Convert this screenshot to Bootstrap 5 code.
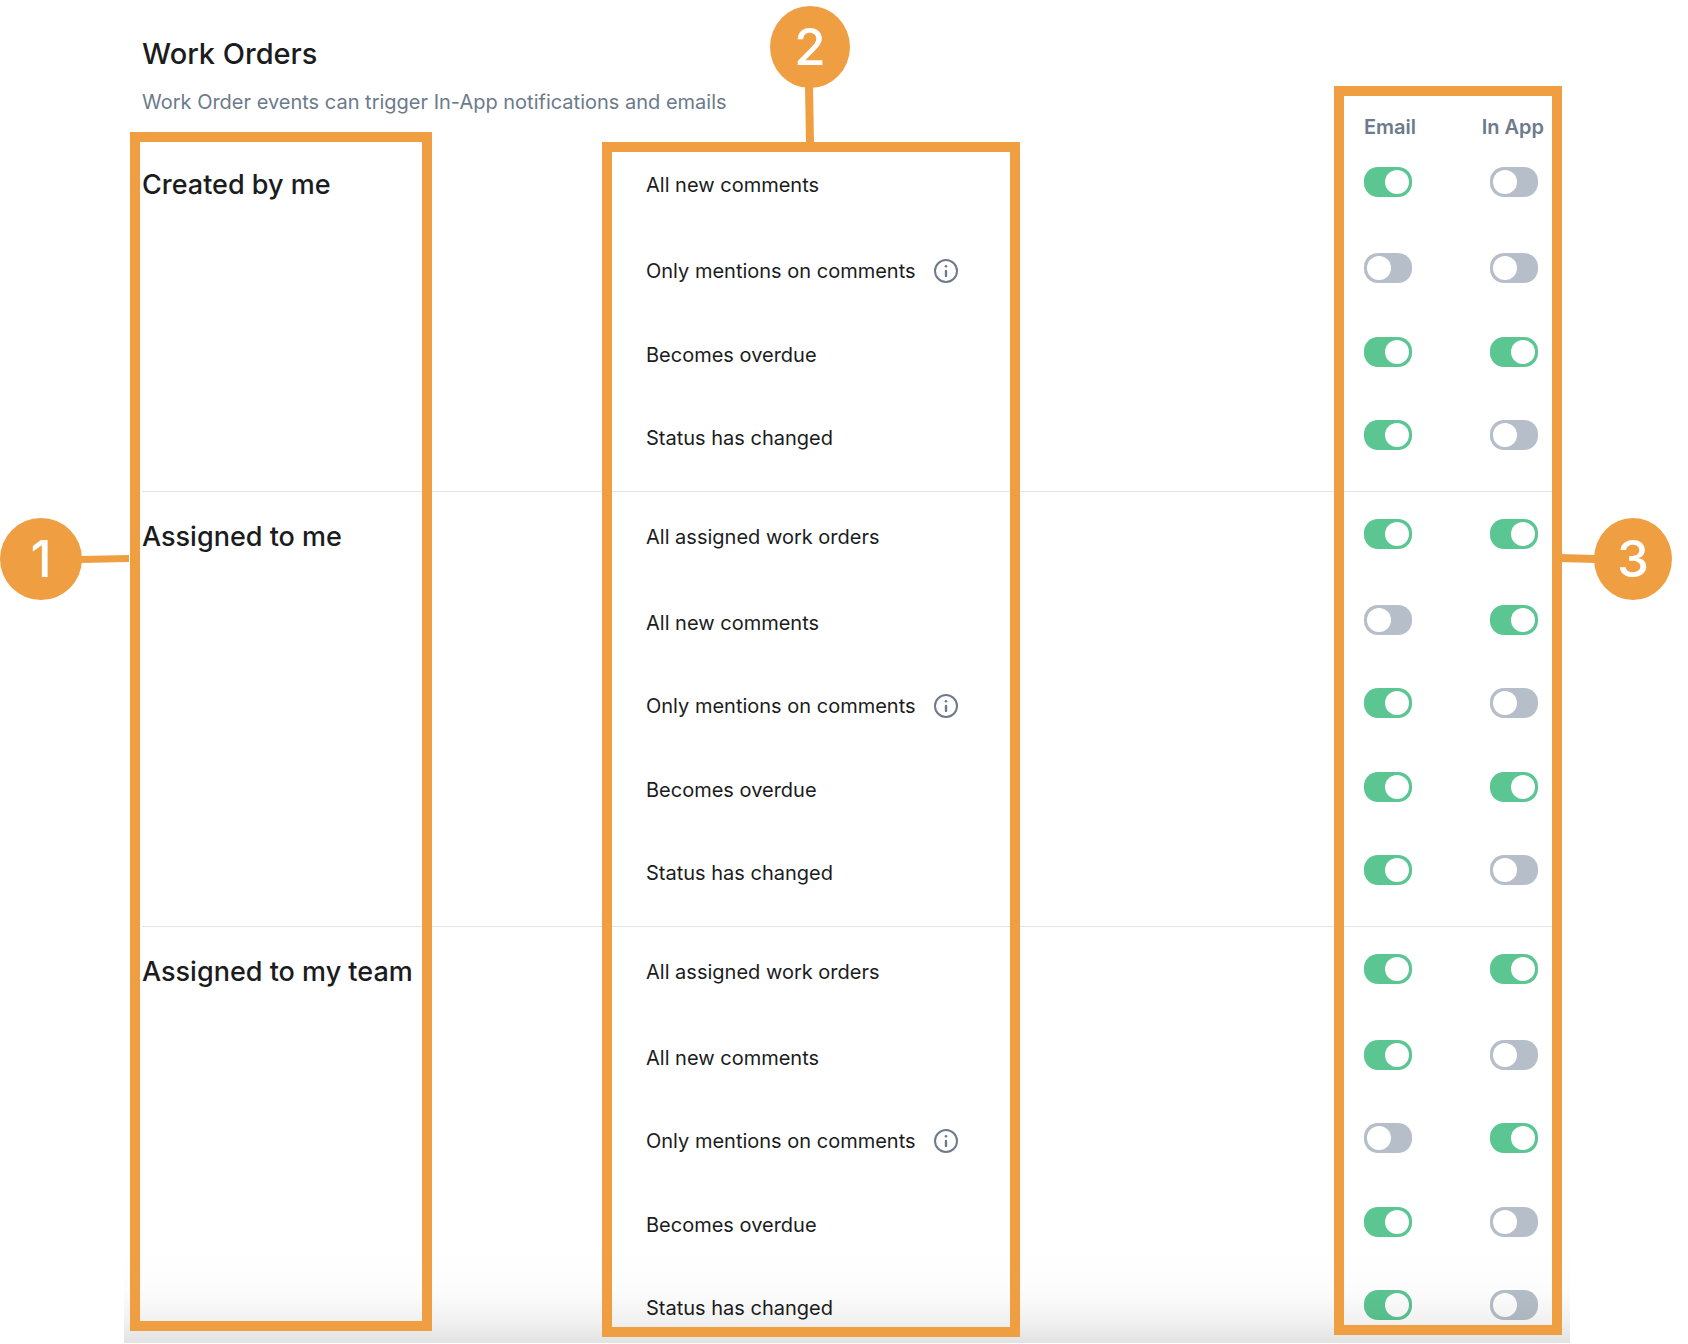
<!DOCTYPE html>
<html lang="en">
<head>
<meta charset="utf-8">
<meta name="viewport" content="width=device-width, initial-scale=1">
<title>Work Orders notifications</title>
<link rel="stylesheet" href="https://cdn.jsdelivr.net/npm/bootstrap@5.3.0/dist/css/bootstrap.min.css">
<style>
  :root { --accent: #ef9f42; --slate: #6c7a8b; --ink: #1b1c1e; }
  body { font-family: Inter, "Liberation Sans", sans-serif; color: var(--ink); background: #fff; font-size: 20px; line-height: 30px; }
  .settings-pane { margin: 0 118px 0 124px; padding: 0 18px; }
  .pane-head { height: 140px; padding-top: 36px; }
  .pane-title { font-size: 29px; line-height: 36px; font-weight: 500; margin-bottom: 15px; }
  .muted-text { color: var(--slate); }
  .channel-head { width: 188px; padding-right: 8px; line-height: 24px; font-weight: 600; padding-bottom: 1px; }
  .group-block { display: grid; grid-template-columns: 504px 1fr; padding-top: 27px; }
  .group-block + .group-block { border-top: 1px solid #e2e4e6; }
  .group-title { font-size: 27px; line-height: 30px; font-weight: 500; padding-top: 3px; margin: 0; }
  .event-line { height: 83px; }
  .event-line:first-child { height: 86px; }
  .event-line:nth-last-child(3) { height: 84px; }
  .event-line:last-child { height: 71px; }
  .group-block:last-of-type .event-line:last-child { height: 53px; }
  .event-name { padding-top: 3px; gap: 18px; }
  .channel-set { width: 188px; padding-right: 14px; }
  .channel-set .form-check-input { width: 48px; height: 30px; margin: 0; border: 0; border-radius: 14px; background: #b6bfc9; position: relative; }
  .channel-set .form-check-input::before { content: ""; display: block; width: 24px; height: 24px; margin: 3px; border-radius: 50%; background: #fff; }
  .channel-set .form-check-input:checked { background: #5bc692; }
  .channel-set .form-check-input:checked::before { margin-left: 21px; }
  .info-btn { width: 24px; height: 24px; color: var(--slate); }
  .info-btn svg { display: block; }
  /* scroll shade and numbered callouts lie over the pane */
  .scroll-shade { left: 0; right: 0; bottom: 0; height: 94px; pointer-events: none;
    background: linear-gradient(rgba(0,0,0,0), rgba(0,0,0,.012) 45%, rgba(0,0,0,.05) 75%, rgba(0,0,0,.115)); }
  .callout-frame { position: absolute; border: 10px solid var(--accent); pointer-events: none; }
  .frame-groups { left: 6px; width: 302px; top: 132px; bottom: 12px; }
  .frame-events { left: 478px; width: 418px; top: 142px; bottom: 6px; }
  .frame-channels { right: 8px; width: 228px; top: 86px; bottom: 8px; }
  .callout-dot { position: absolute; width: 82px; height: 82px; border-radius: 50%; background: var(--accent); color: #fff; font-size: 51px; line-height: 82px; font-weight: 500; text-align: center; }
  .callout-line { position: absolute; background: var(--accent); }
  .dot-one { left: -124px; top: 518px; }
  .line-one { left: -44px; width: 49px; top: 555px; height: 8px; clip-path: polygon(0 1px, 100% 0, 100% 7px, 0 8px); }
  .dot-two { left: 646px; top: 6px; width: 80px; }
  .line-two { left: 681px; width: 9px; top: 86px; height: 58px; clip-path: polygon(0 0, 8px 0, 9px 100%, 1px 100%); }
  .dot-three { right: -102px; top: 518px; width: 78px; }
  .line-three { right: -26px; width: 36px; top: 554px; height: 9px; clip-path: polygon(0 0, 100% 1px, 100% 9px, 0 8px); }
</style>
</head>
<body>
<svg class="d-none" aria-hidden="true">
  <symbol id="info" viewBox="0 0 24 24">
    <circle cx="12" cy="12" r="11" fill="none" stroke="currentColor" stroke-width="2"/>
    <circle cx="12" cy="7.3" r="1.3" fill="currentColor"/>
    <path d="M12 11.9v5" stroke="currentColor" stroke-width="2.4" stroke-linecap="round"/>
  </symbol>
</svg>
<main class="settings-pane position-relative">
  <header class="pane-head d-flex justify-content-between">
    <div>
      <h1 class="pane-title">Work Orders</h1>
      <p class="muted-text m-0">Work Order events can trigger In-App notifications and emails</p>
    </div>
    <div class="channel-head muted-text d-flex justify-content-between align-items-end">
      <span>Email</span><span>In App</span>
    </div>
  </header>

  <section class="group-block">
    <h2 class="group-title">Created by me</h2>
    <div>
      <div class="event-line d-flex justify-content-between align-items-start">
        <div class="event-name d-flex align-items-center"><label for="c1e">All new comments</label></div>
        <div class="channel-set d-flex justify-content-between"><input class="form-check-input" type="checkbox" role="switch" id="c1e" checked><input class="form-check-input" type="checkbox" role="switch" id="c1a" aria-label="All new comments, In App"></div>
      </div>
      <div class="event-line d-flex justify-content-between align-items-start">
        <div class="event-name d-flex align-items-center"><label for="c2e">Only mentions on comments</label><button type="button" class="info-btn btn p-0 border-0" aria-label="More about mentions"><svg width="24" height="24"><use href="#info"/></svg></button></div>
        <div class="channel-set d-flex justify-content-between"><input class="form-check-input" type="checkbox" role="switch" id="c2e"><input class="form-check-input" type="checkbox" role="switch" id="c2a" aria-label="Only mentions on comments, In App"></div>
      </div>
      <div class="event-line d-flex justify-content-between align-items-start">
        <div class="event-name d-flex align-items-center"><label for="c3e">Becomes overdue</label></div>
        <div class="channel-set d-flex justify-content-between"><input class="form-check-input" type="checkbox" role="switch" id="c3e" checked><input class="form-check-input" type="checkbox" role="switch" id="c3a" aria-label="Becomes overdue, In App" checked></div>
      </div>
      <div class="event-line d-flex justify-content-between align-items-start">
        <div class="event-name d-flex align-items-center"><label for="c4e">Status has changed</label></div>
        <div class="channel-set d-flex justify-content-between"><input class="form-check-input" type="checkbox" role="switch" id="c4e" checked><input class="form-check-input" type="checkbox" role="switch" id="c4a" aria-label="Status has changed, In App"></div>
      </div>
    </div>
  </section>

  <section class="group-block">
    <h2 class="group-title">Assigned to me</h2>
    <div>
      <div class="event-line d-flex justify-content-between align-items-start">
        <div class="event-name d-flex align-items-center"><label for="m0e">All assigned work orders</label></div>
        <div class="channel-set d-flex justify-content-between"><input class="form-check-input" type="checkbox" role="switch" id="m0e" checked><input class="form-check-input" type="checkbox" role="switch" id="m0a" aria-label="All assigned work orders, In App" checked></div>
      </div>
      <div class="event-line d-flex justify-content-between align-items-start">
        <div class="event-name d-flex align-items-center"><label for="m1e">All new comments</label></div>
        <div class="channel-set d-flex justify-content-between"><input class="form-check-input" type="checkbox" role="switch" id="m1e"><input class="form-check-input" type="checkbox" role="switch" id="m1a" aria-label="All new comments, In App" checked></div>
      </div>
      <div class="event-line d-flex justify-content-between align-items-start">
        <div class="event-name d-flex align-items-center"><label for="m2e">Only mentions on comments</label><button type="button" class="info-btn btn p-0 border-0" aria-label="More about mentions"><svg width="24" height="24"><use href="#info"/></svg></button></div>
        <div class="channel-set d-flex justify-content-between"><input class="form-check-input" type="checkbox" role="switch" id="m2e" checked><input class="form-check-input" type="checkbox" role="switch" id="m2a" aria-label="Only mentions on comments, In App"></div>
      </div>
      <div class="event-line d-flex justify-content-between align-items-start">
        <div class="event-name d-flex align-items-center"><label for="m3e">Becomes overdue</label></div>
        <div class="channel-set d-flex justify-content-between"><input class="form-check-input" type="checkbox" role="switch" id="m3e" checked><input class="form-check-input" type="checkbox" role="switch" id="m3a" aria-label="Becomes overdue, In App" checked></div>
      </div>
      <div class="event-line d-flex justify-content-between align-items-start">
        <div class="event-name d-flex align-items-center"><label for="m4e">Status has changed</label></div>
        <div class="channel-set d-flex justify-content-between"><input class="form-check-input" type="checkbox" role="switch" id="m4e" checked><input class="form-check-input" type="checkbox" role="switch" id="m4a" aria-label="Status has changed, In App"></div>
      </div>
    </div>
  </section>

  <section class="group-block">
    <h2 class="group-title">Assigned to my team</h2>
    <div>
      <div class="event-line d-flex justify-content-between align-items-start">
        <div class="event-name d-flex align-items-center"><label for="t0e">All assigned work orders</label></div>
        <div class="channel-set d-flex justify-content-between"><input class="form-check-input" type="checkbox" role="switch" id="t0e" checked><input class="form-check-input" type="checkbox" role="switch" id="t0a" aria-label="All assigned work orders, In App" checked></div>
      </div>
      <div class="event-line d-flex justify-content-between align-items-start">
        <div class="event-name d-flex align-items-center"><label for="t1e">All new comments</label></div>
        <div class="channel-set d-flex justify-content-between"><input class="form-check-input" type="checkbox" role="switch" id="t1e" checked><input class="form-check-input" type="checkbox" role="switch" id="t1a" aria-label="All new comments, In App"></div>
      </div>
      <div class="event-line d-flex justify-content-between align-items-start">
        <div class="event-name d-flex align-items-center"><label for="t2e">Only mentions on comments</label><button type="button" class="info-btn btn p-0 border-0" aria-label="More about mentions"><svg width="24" height="24"><use href="#info"/></svg></button></div>
        <div class="channel-set d-flex justify-content-between"><input class="form-check-input" type="checkbox" role="switch" id="t2e"><input class="form-check-input" type="checkbox" role="switch" id="t2a" aria-label="Only mentions on comments, In App" checked></div>
      </div>
      <div class="event-line d-flex justify-content-between align-items-start">
        <div class="event-name d-flex align-items-center"><label for="t3e">Becomes overdue</label></div>
        <div class="channel-set d-flex justify-content-between"><input class="form-check-input" type="checkbox" role="switch" id="t3e" checked><input class="form-check-input" type="checkbox" role="switch" id="t3a" aria-label="Becomes overdue, In App"></div>
      </div>
      <div class="event-line d-flex justify-content-between align-items-start">
        <div class="event-name d-flex align-items-center"><label for="t4e">Status has changed</label></div>
        <div class="channel-set d-flex justify-content-between"><input class="form-check-input" type="checkbox" role="switch" id="t4e" checked><input class="form-check-input" type="checkbox" role="switch" id="t4a" aria-label="Status has changed, In App"></div>
      </div>
    </div>
  </section>

  <div class="scroll-shade position-absolute"></div>
  <div class="callout-frame frame-groups"></div>
  <div class="callout-frame frame-events"></div>
  <div class="callout-frame frame-channels"></div>
  <div class="callout-line line-one"></div>
  <div class="callout-line line-two"></div>
  <div class="callout-line line-three"></div>
  <div class="callout-dot dot-one">1</div>
  <div class="callout-dot dot-two">2</div>
  <div class="callout-dot dot-three">3</div>
</main>
<script src="https://cdn.jsdelivr.net/npm/bootstrap@5.3.0/dist/js/bootstrap.bundle.min.js"></script>
</body>
</html>
